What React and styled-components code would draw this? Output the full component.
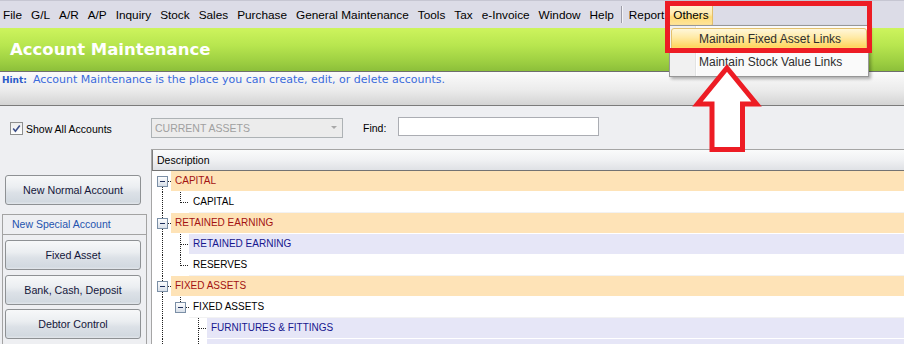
import React from 'react';
import styled, { createGlobalStyle } from 'styled-components';

const UI = '"Liberation Sans", Arial, sans-serif';
const VERD = '"DejaVu Sans", Verdana, sans-serif';

const GlobalStyle = createGlobalStyle`
  html, body { margin: 0; padding: 0; background: #EEEFF2; overflow: hidden; }
  * { box-sizing: border-box; }
`;

const Screen = styled.div`
  position: relative;
  width: 904px;
  height: 344px;
  overflow: hidden;
  background: #EEEFF2;
  font-family: ${UI};
  display: flex;
  flex-direction: column;
`;

/* ---------- menu bar ---------- */
const MenuBar = styled.div`
  flex: none;
  height: 28px;
  display: flex;
  align-items: center;
  gap: 1px;
  background: #DCDCE7;
  border-top: 1px solid #C6C6D2;
  & > :first-child { margin-left: -1px; }
`;

const MenuItem = styled.div`
  height: 22px;
  line-height: 20px;
  padding: 0 3px;
  font-size: 11.8px;
  color: #000;
  white-space: nowrap;
  border: 1px solid ${(p) => (p.$active ? '#E2BE6A' : 'transparent')};
  border-radius: 2px;
  background: ${(p) =>
    p.$active
      ? 'linear-gradient(#FFF6D4 0%, #FFEBAE 45%, #FFDC78 60%, #FFE49A 100%)'
      : 'transparent'};
`;

const MenuSep = styled.div`
  width: 1px;
  height: 17px;
  margin: 0 2px;
  background: #9C9CA8;
  box-shadow: 1px 0 0 #F4F4F8;
`;

/* ---------- title / hint ---------- */
const TitleBar = styled.div`
  flex: none;
  height: 43px;
  display: flex;
  align-items: center;
  padding-left: 10px;
  background: linear-gradient(#CDF45D 0%, #B8E64F 40%, #9CCE41 80%, #8CBF3A 100%);
  color: #fff;
  font-family: ${VERD};
  font-weight: bold;
  font-size: 16.5px;
`;

const HintBar = styled.div`
  flex: none;
  height: 35px;
  padding: 1px 0 0 2px;
  border-top: 1px solid #6E6E6E;
  border-bottom: 1px solid #7B7B7B;
  background: linear-gradient(#FBFBFB 0%, #EBEBEB 55%, #D4D4D4 100%);
  font-family: ${VERD};
  font-size: 11px;
  line-height: 14px;
  color: #3B6BDC;
  white-space: nowrap;
`;

const HintLabel = styled.span`
  font-weight: bold;
  font-size: 9px;
  color: #2A5AC8;
  margin-right: 6px;
`;

/* ---------- toolbar ---------- */
const Toolbar = styled.div`
  flex: none;
  height: 43px;
  display: flex;
  align-items: center;
  padding-left: 10px;
`;

const CheckField = styled.label`
  width: 141px;
  display: flex;
  align-items: center;
  margin-top: 2px;
`;

const CheckBox = styled.span`
  width: 13px;
  height: 13px;
  border: 1px solid #8E8F8F;
  background: linear-gradient(#EDEDED, #FFFFFF);
  display: flex;
  align-items: center;
  justify-content: center;
`;

const FieldLabel = styled.span`
  flex: none;
  font-size: 10.5px;
  color: #000;
  margin-left: ${(p) => p.$gap || 0}px;
  width: ${(p) => (p.$w ? `${p.$w}px` : 'auto')};
`;

const Combo = styled.div`
  width: 192px;
  height: 20px;
  border: 1px solid #ADB2B5;
  background: #ECECEC;
  display: flex;
  align-items: center;
  padding-left: 3px;
  font-size: 10.5px;
  color: #A0A0A0;
`;

const ComboArrow = styled.span`
  margin-left: auto;
  margin-right: 5px;
  width: 0;
  height: 0;
  border-left: 3px solid transparent;
  border-right: 3px solid transparent;
  border-top: 3px solid #A8A8A8;
`;

const FindInput = styled.div`
  width: 201px;
  height: 19px;
  border: 1px solid #ABADB3;
  background: #fff;
  margin-top: -3px;
`;

/* ---------- main ---------- */
const Main = styled.div`
  flex: 1;
  min-height: 0;
  display: flex;
`;

const LeftPanel = styled.div`
  width: 151px;
  flex: none;
  padding-top: 26px;
  display: flex;
  flex-direction: column;
`;

const ActionButton = styled.button`
  flex: none;
  width: 136px;
  height: 30px;
  margin-left: ${(p) => (p.$inset ? 0 : 5)}px;
  border: 1px solid #8E9194;
  border-radius: 3px;
  background: linear-gradient(#F7F8F9 0%, #EBEEF1 40%, #DCE1E7 60%, #D2D9E0 92%, #E2E6EB 100%);
  font-family: ${UI};
  font-size: 10.7px;
  color: #14163A;
  padding: 0;
`;

const Group = styled.div`
  flex: 1;
  margin: 9px 0 0 2px;
  width: 145px;
  border: 1px solid #A3A3A3;
  border-bottom: none;
  display: flex;
  flex-direction: column;
`;

const GroupHeader = styled.div`
  height: 20px;
  line-height: 19px;
  padding-left: 9px;
  border-bottom: 1px solid #A3A3A3;
  font-size: 10.5px;
  color: #2453AE;
`;

const GroupBody = styled.div`
  display: flex;
  flex-direction: column;
  gap: 4.5px;
  padding: 5px 0 0 2px;
`;

const Grid = styled.div`
  flex: 1;
  min-width: 0;
  border-left: 1px solid #A5A5A5;
  border-top: 1px solid #A5A5A5;
  background: #fff;
  display: flex;
  flex-direction: column;
`;

const GridHeader = styled.div`
  flex: none;
  height: 21px;
  line-height: 20px;
  padding-left: 4px;
  border-left: 1px solid #7E7E7E;
  border-bottom: 1px solid #737373;
  background: linear-gradient(#FAFBFB 0%, #F0F1F3 50%, #DFE1E5 100%);
  font-size: 10.5px;
  color: #000;
`;

const TreeBody = styled.div`
  padding-left: 1px;
  display: flex;
  flex-direction: column;
`;

const TreeRow = styled.div`
  display: flex;
  height: 21px;
`;

const tones = {
  group: { bg: '#FEE3B7', fg: '#A31212' },
  plain: { bg: '#FFFFFF', fg: '#000000' },
  alt: { bg: '#E6E6F7', fg: '#16168E' },
};

const RowText = styled.div`
  flex: 1;
  height: 21px;
  line-height: 20px;
  padding-left: 4px;
  border-bottom: 1px solid ${(p) => (p.$tone === 'plain' ? '#F2F2F2' : '#fff')};
  background: ${(p) => tones[p.$tone].bg};
  color: ${(p) => tones[p.$tone].fg};
  font-size: 10px;
  white-space: nowrap;
`;

const CellSvg = styled.svg`
  flex: none;
  display: block;
`;

/* ---------- overlays ---------- */
const DropMenu = styled.div`
  position: absolute;
  left: 669px;
  top: 25px;
  width: 200px;
  padding: 2px 0;
  border: 1px solid #979797;
  background: linear-gradient(to right, #F1F1F1 0 25px, #E2E3E3 25px 26px, #FFFFFF 26px 27px, #FAFAFA 27px);
  box-shadow: 2px 2px 3px rgba(0, 0, 0, 0.3);
  z-index: 10;
`;

const DropItem = styled.div`
  height: 23px;
  line-height: 21px;
  margin: 0 1px;
  padding-left: 27px;
  font-size: 12px;
  color: #2E2E2E;
  white-space: nowrap;
  border: 1px solid ${(p) => (p.$active ? '#E3C06E' : 'transparent')};
  border-radius: 3px;
  background: ${(p) =>
    p.$active
      ? 'linear-gradient(#FFF7DA 0%, #FFEAA6 40%, #FFD65F 85%, #FFE08C 100%)'
      : 'transparent'};
`;

const Callout = styled.div`
  position: absolute;
  left: 665px;
  top: 1px;
  width: 207px;
  height: 52px;
  border: 5px solid #ED1C24;
  z-index: 20;
  pointer-events: none;
`;

const ArrowSvg = styled.svg`
  position: absolute;
  left: 690px;
  top: 58px;
  z-index: 21;
  pointer-events: none;
`;

/* ---------- pieces ---------- */
const TreeCell = ({ up, down, right, box }) => (
  <CellSvg width="18" height="21" viewBox="0 0 18 21" shapeRendering="crispEdges">
    <g stroke="#222" strokeWidth="1" strokeDasharray="1 1" fill="none">
      {up && <line x1="9.5" y1="0" x2="9.5" y2={box ? 5 : 11} />}
      {down && <line x1="9.5" y1={box ? 16 : 10} x2="9.5" y2="21" />}
      {right && <line x1={box ? 15 : 10} y1="10.5" x2="18" y2="10.5" />}
    </g>
    {box && (
      <g>
        <defs>
          <linearGradient id="exg" x1="0" y1="0" x2="0" y2="1">
            <stop offset="0" stopColor="#FFFFFF" />
            <stop offset="1" stopColor="#D6DEE8" />
          </linearGradient>
        </defs>
        <rect x="4.5" y="5.5" width="10" height="10" fill="url(#exg)" stroke="#7B8FA6" />
        <line x1="7" y1="10.5" x2="12" y2="10.5" stroke="#1E2F5C" />
      </g>
    )}
  </CellSvg>
);

const rows = [
  { cells: [{ box: 1, down: 1, right: 1 }], text: 'CAPITAL', tone: 'group' },
  { cells: [{ up: 1, down: 1 }, { up: 1, right: 1 }], text: 'CAPITAL', tone: 'plain' },
  { cells: [{ box: 1, up: 1, down: 1, right: 1 }], text: 'RETAINED EARNING', tone: 'group' },
  { cells: [{ up: 1, down: 1 }, { up: 1, down: 1, right: 1 }], text: 'RETAINED EARNING', tone: 'alt' },
  { cells: [{ up: 1, down: 1 }, { up: 1, right: 1 }], text: 'RESERVES', tone: 'plain' },
  { cells: [{ box: 1, up: 1, down: 1, right: 1 }], text: 'FIXED ASSETS', tone: 'group' },
  { cells: [{ up: 1, down: 1 }, { box: 1, up: 1, right: 1 }], text: 'FIXED ASSETS', tone: 'plain' },
  { cells: [{ up: 1, down: 1 }, {}, { up: 1, down: 1, right: 1 }], text: 'FURNITURES & FITTINGS', tone: 'alt' },
  { cells: [{ up: 1, down: 1 }, {}, { up: 1, down: 1, right: 1 }], text: '', tone: 'alt' },
];

const menus = ['File', 'G/L', 'A/R', 'A/P', 'Inquiry', 'Stock', 'Sales', 'Purchase', 'General Maintenance', 'Tools', 'Tax', 'e-Invoice', 'Window', 'Help'];

export default function App() {
  return (
    <>
      <GlobalStyle />
      <Screen>
        <MenuBar>
          {menus.map((m) => (
            <MenuItem key={m}>{m}</MenuItem>
          ))}
          <MenuSep />
          <MenuItem>Report</MenuItem>
          <MenuItem $active>Others</MenuItem>
        </MenuBar>

        <TitleBar>Account Maintenance</TitleBar>

        <HintBar>
          <HintLabel>Hint:</HintLabel>
          Account Maintenance is the place you can create, edit, or delete accounts.
        </HintBar>

        <Toolbar>
          <CheckField>
            <CheckBox>
              <svg width="9" height="9" viewBox="0 0 9 9">
                <path d="M1.2 4.6 L3.4 7.2 L7.8 1.4" stroke="#3D4F8A" strokeWidth="1.6" fill="none" />
              </svg>
            </CheckBox>
            <FieldLabel $gap={3}>Show All Accounts</FieldLabel>
          </CheckField>
          <Combo>
            CURRENT ASSETS
            <ComboArrow />
          </Combo>
          <FieldLabel $gap={20} $w={35}>Find:</FieldLabel>
          <FindInput />
        </Toolbar>

        <Main>
          <LeftPanel>
            <ActionButton>New Normal Account</ActionButton>
            <Group>
              <GroupHeader>New Special Account</GroupHeader>
              <GroupBody>
                <ActionButton $inset>Fixed Asset</ActionButton>
                <ActionButton $inset>Bank, Cash, Deposit</ActionButton>
                <ActionButton $inset>Debtor Control</ActionButton>
                <ActionButton $inset aria-label="Creditor Control" />
              </GroupBody>
            </Group>
          </LeftPanel>

          <Grid>
            <GridHeader>Description</GridHeader>
            <TreeBody>
              {rows.map((r, i) => (
                <TreeRow key={i}>
                  {r.cells.map((c, j) => (
                    <TreeCell key={j} {...c} />
                  ))}
                  <RowText $tone={r.tone}>{r.text}</RowText>
                </TreeRow>
              ))}
            </TreeBody>
          </Grid>
        </Main>

        <DropMenu>
          <DropItem $active>Maintain Fixed Asset Links</DropItem>
          <DropItem>Maintain Stock Value Links</DropItem>
        </DropMenu>

        <Callout />

        <ArrowSvg width="75" height="96" viewBox="0 0 75 96">
          <polygon
            points="37,10 66.5,46 52.5,46 52.5,91.5 22,91.5 22,46 7.5,46"
            fill="#FFFFFF"
            stroke="#ED1C24"
            strokeWidth="5"
            strokeLinejoin="miter"
          />
        </ArrowSvg>
      </Screen>
    </>
  );
}
